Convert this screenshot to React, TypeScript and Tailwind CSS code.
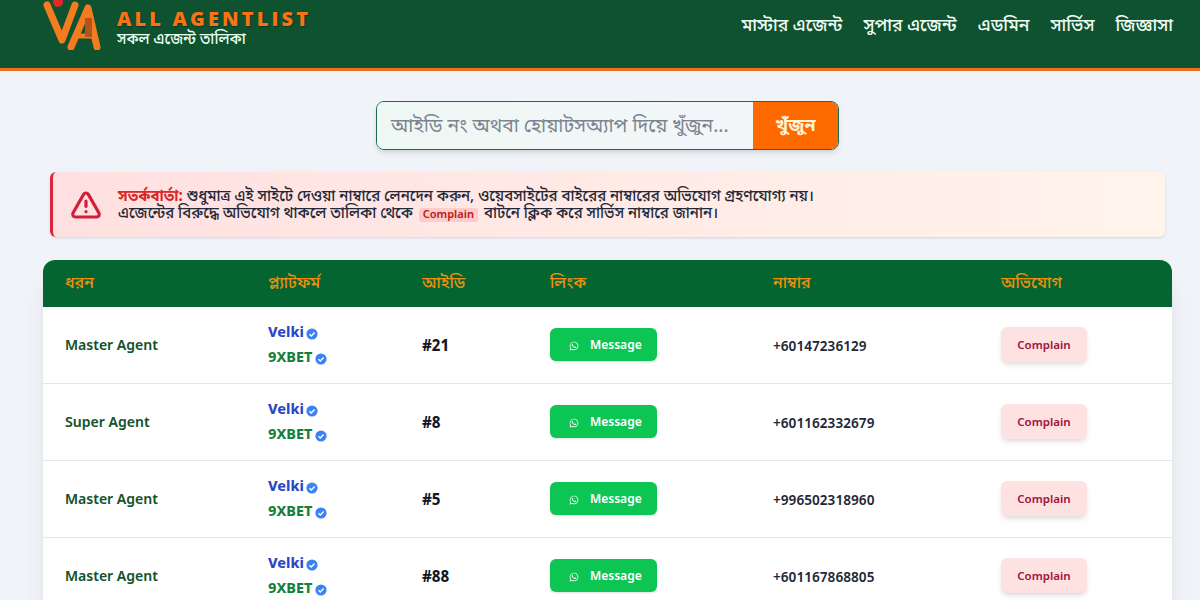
import React from 'react';
import { TriangleAlert } from 'lucide-react';
import { FaWhatsapp } from 'react-icons/fa';

const bn = { fontFamily: '"Noto Sans Bengali", "Noto Sans", sans-serif' };

const navItems = ['মাস্টার এজেন্ট', 'সুপার এজেন্ট', 'এডমিন', 'সার্ভিস', 'জিজ্ঞাসা'];

const rows = [
    { type: 'Master Agent', id: '#21', phone: '+60147236129' },
    { type: 'Super Agent', id: '#8', phone: '+601162332679' },
    { type: 'Master Agent', id: '#5', phone: '+996502318960' },
    { type: 'Master Agent', id: '#88', phone: '+601167868805' },
];

const gridCols = 'grid grid-cols-[225px_154px_128px_223px_228px_171px]';

const Badge: React.FC = () => (
    <svg viewBox="0 0 12 12" className="w-[12px] h-[12px] shrink-0">
        <circle cx="6" cy="6" r="5.6" fill="#3b82f6" />
        <path d="M3.5 6.2 5.3 7.9 8.6 4.4" fill="none" stroke="#fff" strokeWidth="1.4" />
    </svg>
);

const Logo: React.FC = () => (
    <svg viewBox="0 0 60 52" className="w-[60px] h-[52px] shrink-0">
        <path d="M4 7 L19 42 L32 7" fill="none" stroke="#f47b20" strokeWidth="7" strokeLinecap="round" strokeLinejoin="round" />
        <path d="M28 49 L45 10 L54 49" fill="none" stroke="#f47b20" strokeWidth="7" strokeLinecap="round" strokeLinejoin="round" />
        <path d="M33 38 H50" stroke="#f47b20" strokeWidth="5" />
        <rect x="42" y="20" width="7" height="19" fill="#b4531a" />
        <circle cx="15" cy="4" r="5" fill="#e5262b" />
    </svg>
);

const App: React.FC = () => {
    return (
        <div className="h-[600px] overflow-hidden bg-[#f0f4f8]" style={bn}>
            {/* Header */}
            <header className="h-[71px] bg-[#0f5230] border-b-[3px] border-[#ea6f1c] flex items-start justify-between pl-[43px] pr-[27px]">
                <div className="flex items-start -mt-[2px]">
                    <Logo />
                    <div className="ml-[14px] mt-[11px]">
                        <div className="text-[20px] leading-[20px] font-extrabold tracking-[3.1px] text-[#f97316] font-['Open_Sans'] [text-shadow:1px_1px_1px_rgba(0,0,0,0.35)]">ALL AGENTLIST</div>
                        <div className="text-[15px] leading-[16px] font-medium text-[#e6fff0] mt-[3px]">সকল এজেন্ট তালিকা</div>
                    </div>
                </div>
                <nav className="flex gap-[21px] mt-[15px] text-[17.6px] leading-[24px] font-medium text-[#f0fdf4]">
                    {navItems.map((item) => (
                        <span key={item}>{item}</span>
                    ))}
                </nav>
            </header>

            {/* Search */}
            <div className="flex justify-center mt-[30px] pl-[15px]">
                <div className="w-[463px] h-[49px] flex rounded-lg border border-[#1f6b4a] overflow-hidden shadow-md">
                    <div className="flex-1 bg-gradient-to-r from-[#eef8f4] to-[#f3f6f9] flex items-center pl-[14px] pt-[4px] text-[19.3px] text-[#7b8490] whitespace-nowrap overflow-hidden">আইডি নং অথবা হোয়াটসঅ্যাপ দিয়ে খুঁজুন...</div>
                    <div className="w-[85px] bg-[#ff6a00] flex items-center justify-center pt-[2px] text-[#fff3d6] text-[18px] font-bold">খুঁজুন</div>
                </div>
            </div>

            {/* Warning */}
            <div className="mt-[22px] ml-[50px] w-[1115px] h-[65px] rounded-md border-l-[3px] border-[#dc2640] bg-gradient-to-r from-[#ffe0e0] to-[#fff4ec] shadow-sm flex items-center pl-[17px]">
                <TriangleAlert className="w-[32px] h-[32px] text-[#d01f37]" strokeWidth={2.4} />
                <div className="ml-[16px] pt-[2px] text-[15px] leading-[17px] font-medium text-[#1f2937] whitespace-nowrap">
                    <div>
                        <span className="text-[#dc2626] font-bold">সতর্কবার্তা:</span> শুধুমাত্র এই সাইটে দেওয়া নাম্বারে লেনদেন করুন, ওয়েবসাইটের বাইরের নাম্বারের অভিযোগ গ্রহণযোগ্য নয়।
                    </div>
                    <div>
                        এজেন্টের বিরুদ্ধে অভিযোগ থাকলে তালিকা থেকে
                        <span className="inline-block mx-[6px] px-[4px] rounded-[3px] bg-[#fecaca] text-[#b91c1c] text-[11px] leading-[14px] font-semibold">Complain</span>
                        বাটনে ক্লিক করে সার্ভিস নাম্বারে জানান।
                    </div>
                </div>
            </div>

            {/* Table */}
            <div className="mt-[23px] ml-[43px] w-[1129px] rounded-t-xl bg-white shadow-xl overflow-hidden">
                <div className={`${gridCols} h-[47px] items-center bg-[#046530] text-[16px] font-medium text-[#ee8f10]`}>
                    {['ধরন', 'প্ল্যাটফর্ম', 'আইডি', 'লিংক', 'নাম্বার', 'অভিযোগ'].map((h, i) => (
                        <div key={h} className={i === 0 ? 'pl-[22px]' : ''}>{h}</div>
                    ))}
                </div>
                {rows.map((r, i) => (
                    <div key={i} className={`${gridCols} h-[77px] items-center border-b border-[#e5e7eb]`}>
                        <div className="pl-[22px] pt-[3px] text-[14px] font-semibold text-[#14532d]">{r.type}</div>
                        <div className="flex flex-col gap-[3px] pt-[2px] text-[14.5px] leading-[22px] font-bold">
                            <div className="flex items-center gap-[2px] text-[#2a47c4]">Velki <Badge /></div>
                            <div className="flex items-center gap-[3px] text-[#15803d]">9XBET <Badge /></div>
                        </div>
                        <div className="pt-[5px] text-[15px] font-bold text-[#111827]">{r.id}</div>
                        <div className="pb-[2px]">
                            <div className="w-[107px] h-[33px] pt-[4px] rounded-md bg-[#0cc553] shadow-sm flex items-center pl-[19px] gap-[11px] text-white text-[12px] font-semibold">
                                <FaWhatsapp className="w-[10px] h-[10px]" />
                                Message
                            </div>
                        </div>
                        <div className="pt-[6px] text-[13.5px] font-semibold text-[#1f2937]">{r.phone}</div>
                        <div className="pb-[2px]">
                            <div className="w-[86px] h-[35px] pt-[5px] rounded-md bg-[#fee2e2] shadow-md flex items-center justify-center text-[#a3163a] text-[11.5px] font-semibold">Complain</div>
                        </div>
                    </div>
                ))}
            </div>
        </div>
    );
};

export default App;
